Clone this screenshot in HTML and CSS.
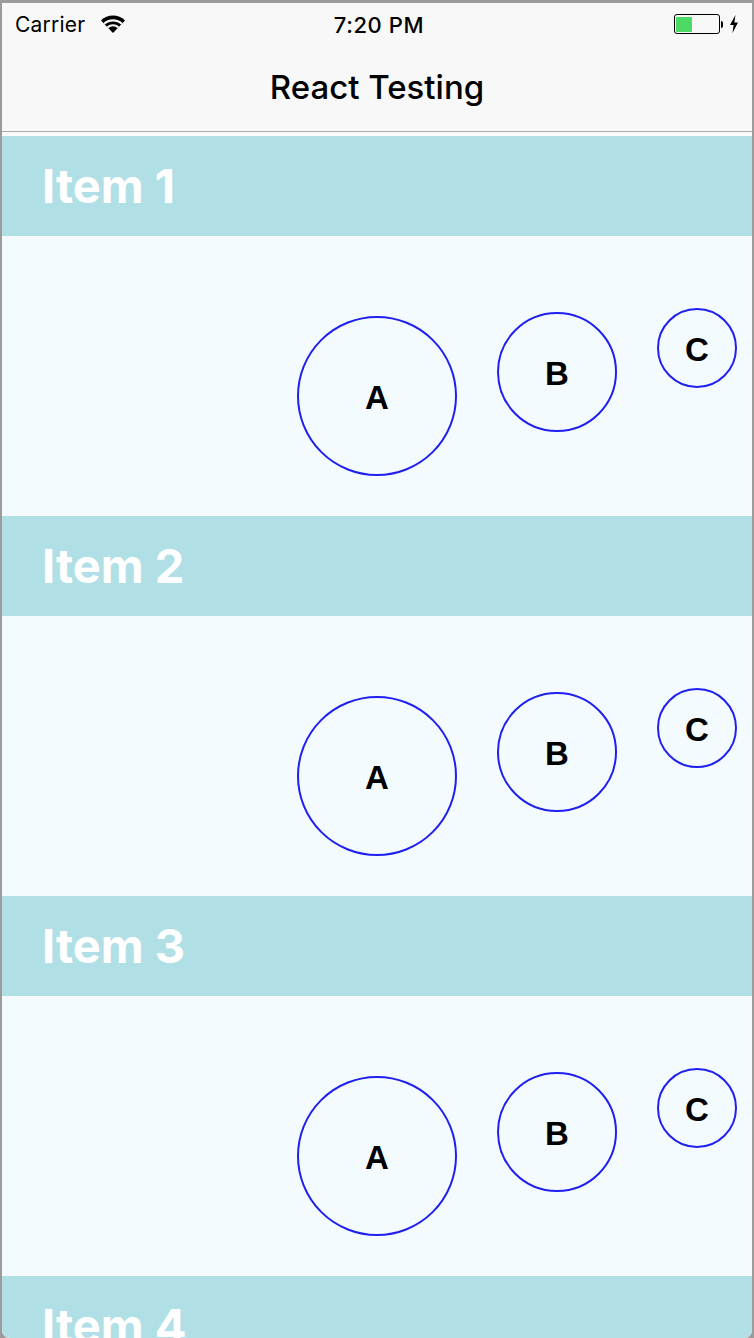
FILE: index.html
```html
<!DOCTYPE html>
<html>
<head>
<meta charset="utf-8">
<link rel="stylesheet" href="styles.css">
</head>
<body>
<div class="screen">
  <header class="top">
    <div class="status">
      <div class="status-left">
        <span class="carrier">Carrier</span>
        <svg class="wifi" width="26" height="20" viewBox="0 0 26 20">
          <path d="M13 19 L1 6.5 A17 17 0 0 1 25 6.5 Z" fill="#000"/>
          <path d="M4.2 9.8 A13 13 0 0 1 21.8 9.8" stroke="#f8f8f8" stroke-width="2.2" fill="none"/>
          <path d="M7.6 13.3 A8.2 8.2 0 0 1 18.4 13.3" stroke="#f8f8f8" stroke-width="2.2" fill="none"/>
        </svg>
      </div>
      <span class="time">7:20 PM</span>
      <div class="status-right">
        <div class="battery"><div class="battery-fill"></div></div>
        <div class="battery-nub"></div>
        <svg class="bolt" width="10" height="18" viewBox="0 0 10 18">
          <path d="M6.5 0 L1 10 L4.6 10 L3.5 18 L9 7.6 L5.4 7.6 Z" fill="#000"/>
        </svg>
      </div>
    </div>
    <div class="nav"><span class="nav-title">React Testing</span></div>
  </header>
  <div class="list">
    <section class="item">
      <div class="item-head">Item 1</div>
      <div class="item-body">
        <div class="circle c-a">A</div>
        <div class="circle c-b">B</div>
        <div class="circle c-c">C</div>
      </div>
    </section>
    <section class="item">
      <div class="item-head">Item 2</div>
      <div class="item-body">
        <div class="circle c-a">A</div>
        <div class="circle c-b">B</div>
        <div class="circle c-c">C</div>
      </div>
    </section>
    <section class="item">
      <div class="item-head">Item 3</div>
      <div class="item-body">
        <div class="circle c-a">A</div>
        <div class="circle c-b">B</div>
        <div class="circle c-c">C</div>
      </div>
    </section>
    <section class="item">
      <div class="item-head">Item 4</div>
      <div class="item-body"></div>
    </section>
  </div>
</div>
</body>
</html>
```
FILE: styles.css
```css
html, body {
  margin: 0;
  padding: 0;
}
body {
  background: #9b9b9b;
  width: 754px;
  height: 1338px;
  overflow: hidden;
}
.screen {
  margin: 3px 2px 0 2px;
  width: 750px;
  height: 1335px;
  background: #ffffff;
  overflow: hidden;
  border-radius: 0 0 8px 8px;
}
.top {
  background: #f8f8f8;
  border-bottom: 1px solid #a8a8a8;
}
.status {
  height: 40px;
  display: flex;
  align-items: center;
  justify-content: space-between;
  padding: 3px 13px 0 13px;
  box-sizing: border-box;
  font-family: Inter, "Liberation Sans", sans-serif;
  color: #000;
}
.status-left {
  display: flex;
  align-items: center;
  gap: 15px;
  width: 200px;
}
.carrier {
  font-size: 21px;
  letter-spacing: 0.2px;
}
.wifi {
  margin-top: -2px;
}
.time {
  font-size: 22px;
  font-weight: 500;
  letter-spacing: 0.6px;
  margin-left: 4px;
}
.status-right {
  display: flex;
  align-items: center;
  justify-content: flex-end;
  width: 200px;
  margin-top: -1px;
}
.battery {
  width: 41px;
  height: 15px;
  border: 1.5px solid #000;
  border-radius: 3px;
  padding: 1.5px;
  box-sizing: content-box;
  display: flex;
}
.battery-fill {
  width: 16px;
  height: 15px;
  background: #4cd964;
  border-radius: 1px;
}
.battery-nub {
  width: 2px;
  height: 7px;
  background: #000;
  border-radius: 0 2px 2px 0;
  margin-left: 1px;
}
.bolt {
  margin-left: 6px;
}
.nav {
  height: 88px;
  display: flex;
  align-items: center;
  justify-content: center;
}
.nav-title {
  font-family: Inter, "Liberation Sans", sans-serif;
  font-size: 33px;
  font-weight: 500;
  color: #000;
  margin-top: 0;
  margin-left: 0;
}
.list {
  padding-top: 4px;
  background: #fafafa;
}
.item-head {
  height: 100px;
  background: #b0e0e6;
  color: #ffffff;
  font-family: Inter, "Liberation Sans", sans-serif;
  font-weight: 700;
  font-size: 47px;
  display: flex;
  align-items: center;
  padding-left: 40px;
  padding-bottom: 2px;
  box-sizing: border-box;
}
.item-body {
  height: 280px;
  background: #f4fbff;
  display: flex;
  justify-content: flex-end;
  align-items: flex-start;
  gap: 40px;
  padding-right: 15px;
}
.circle {
  border: 2px solid #1f1ff0;
  border-radius: 50%;
  box-sizing: border-box;
  display: flex;
  align-items: center;
  justify-content: center;
  padding-top: 4px;
  font-family: "Liberation Sans", Arial, sans-serif;
  font-weight: 700;
  font-size: 33px;
  color: #000;
}
.c-a {
  width: 160px;
  height: 160px;
  margin-top: 80px;
}
.c-b {
  width: 120px;
  height: 120px;
  margin-top: 76px;
}
.c-c {
  width: 80px;
  height: 80px;
  margin-top: 72px;
}
```
